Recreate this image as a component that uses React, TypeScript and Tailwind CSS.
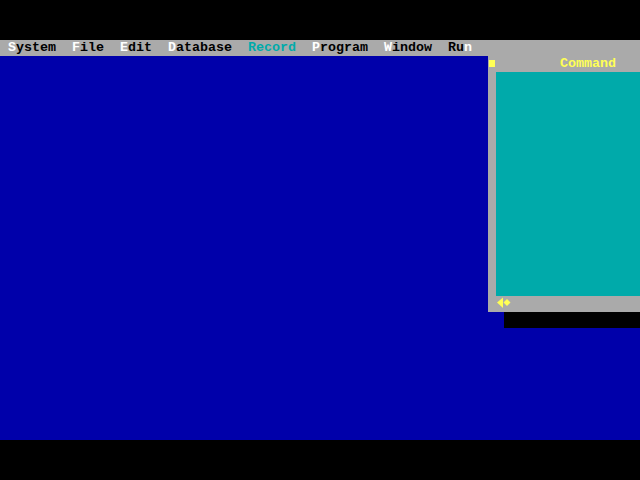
import React from "react";

// FoxPro-style DOS desktop, 80x25 text cells of 8x16 px
const menu = [
  { pre: "", key: "S", post: "ystem" },
  { pre: "", key: "F", post: "ile" },
  { pre: "", key: "E", post: "dit" },
  { pre: "", key: "D", post: "atabase" },
  { pre: "Record", key: "", post: "", disabled: true },
  { pre: "", key: "P", post: "rogram" },
  { pre: "", key: "W", post: "indow" },
  { pre: "Ru", key: "n", post: "" },
];

const MenuBar: React.FC = () => (
  <div className="flex h-[16px] bg-[#aaaaaa] pl-[8px] gap-[16px] leading-[16px]">
    {menu.map((m, i) =>
      m.disabled ? (
        <span key={i} className="text-[#00aaaa]">
          {m.pre}
        </span>
      ) : (
        <span key={i} className="text-black">
          {m.pre}
          <span className="text-white">{m.key}</span>
          {m.post}
        </span>
      )
    )}
  </div>
);

const CommandWindow: React.FC = () => (
  <>
    <div className="absolute left-[488px] top-0 w-[152px] h-[256px] bg-[#aaaaaa] flex flex-col">
      {/* title row */}
      <div className="flex h-[16px] leading-[16px]">
        <div className="w-[8px] pt-[4px] pl-[1px]">
          <div className="w-[6px] h-[7px] bg-[#ffff55]" />
        </div>
        <div className="ml-[64px] text-[#ffff55]">Command</div>
      </div>
      {/* body */}
      <div className="flex flex-1">
        <div className="w-[8px]" />
        <div className="flex-1 bg-[#00aaaa]" />
      </div>
      {/* bottom row */}
      <div className="flex h-[16px] pl-[8px]">
        <svg width="16" height="16" viewBox="0 0 16 16">
          <polygon points="1,6.5 7,1.5 7,12" fill="#ffff55" />
          <polygon points="11,3 14.5,6.5 11,10 7.5,6.5" fill="#ffff55" />
        </svg>
      </div>
    </div>
    {/* drop shadow */}
    <div className="absolute left-[504px] top-[256px] w-[136px] h-[16px] bg-black" />
  </>
);

export default function App() {
  return (
    <div className="w-[640px] h-[480px] bg-black flex flex-col font-['Liberation_Mono',monospace] font-bold text-[13.333px] whitespace-pre">
      <div className="h-[40px]" />
      <MenuBar />
      <div className="relative h-[384px] bg-[#0000aa]">
        <CommandWindow />
      </div>
      <div className="h-[40px]" />
    </div>
  );
}
